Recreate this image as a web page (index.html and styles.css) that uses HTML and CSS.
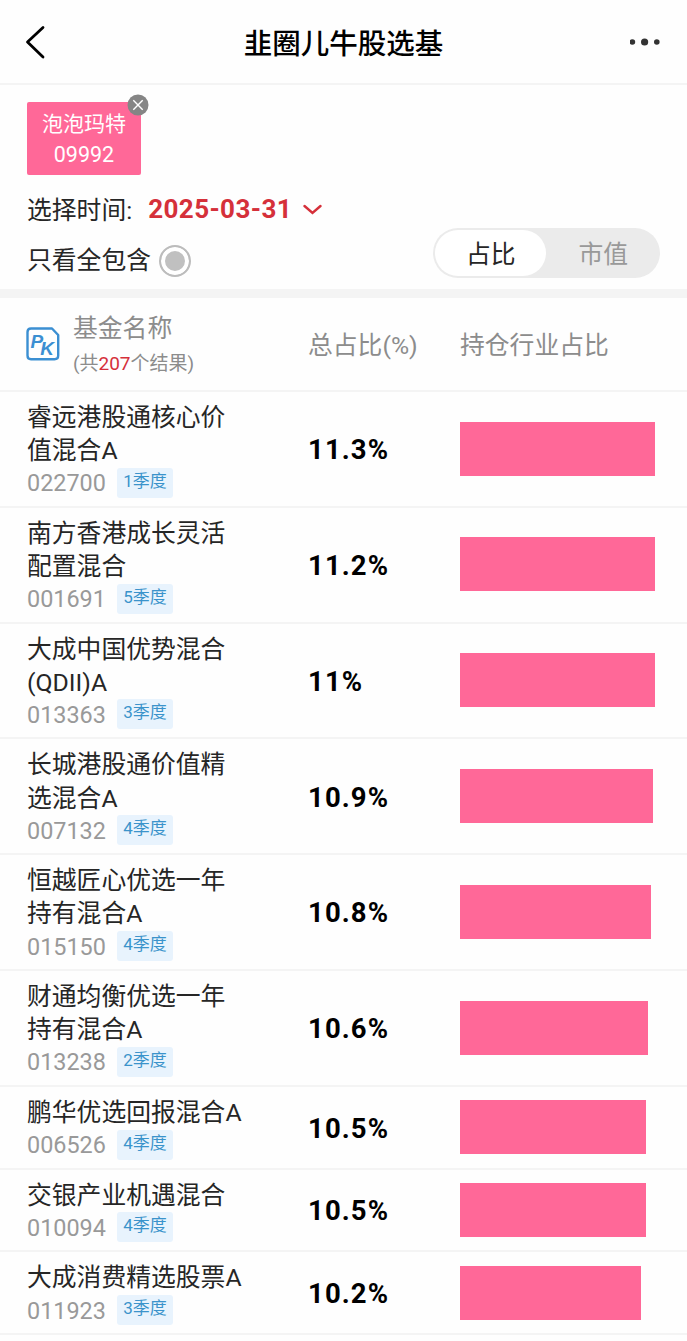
FILE: index.html
```html
<!DOCTYPE html>
<html lang="zh-CN">
<head>
  <meta charset="UTF-8">
  <title>韭圈儿牛股选基</title>
  <link rel="stylesheet" href="styles.css">
</head>
<body>

  <header class="navbar">
    <svg class="back" width="22" height="34" viewBox="0 0 22 34">
      <path d="M19 2.5L3.5 17L19 32" fill="none" stroke="#000" stroke-width="2.8" stroke-linecap="round" stroke-linejoin="round"/>
    </svg>
    <h1>韭圈儿牛股选基</h1>
    <svg class="more" width="32" height="10" viewBox="0 0 32 10">
      <circle cx="2.4" cy="5" r="2.8"/>
      <circle cx="14.6" cy="5" r="3.6"/>
      <circle cx="26.8" cy="5" r="2.8"/>
    </svg>
  </header>

  <section class="filters">
    <div class="stock">
      <span>泡泡玛特</span>
      <span class="stock-code">09992</span>
      <svg class="stock-close" width="22" height="22" viewBox="0 0 22 22">
        <circle cx="11" cy="11" r="10.5" fill="#858585"/>
        <path d="M6.3 6.3L15.7 15.7M15.7 6.3L6.3 15.7" stroke="#fff" stroke-width="1.4"/>
      </svg>
    </div>
    <div class="date-row">
      <span>选择时间:</span>
      <b class="date">2025-03-31</b>
      <svg width="20" height="12" viewBox="0 0 20 12">
        <path d="M1.5 2L9.5 9L17.5 2" fill="none" stroke="#d5303a" stroke-width="2.4" stroke-linecap="round"/>
      </svg>
    </div>
    <div class="option-row">
      <span>只看全包含</span>
      <i class="radio"></i>
      <div class="switch">
        <span class="active">占比</span>
        <span>市值</span>
      </div>
    </div>
  </section>

  <section class="table-head">
    <svg class="pk" width="34" height="34" viewBox="0 0 34 34">
      <path d="M5 1.5H26L32.2 8V28.5Q32.2 32.2 28.5 32.2H5Q1.5 32.2 1.5 28.5V5Q1.5 1.5 5 1.5Z" fill="none" stroke="#3b8fd2" stroke-width="2.4" stroke-linejoin="round"/>
      <text x="4.5" y="21" font-size="19">P<tspan dx="-3" dy="6.5">K</tspan></text>
    </svg>
    <div class="head-name">
      <span>基金名称</span>
      <small>(共<em>207</em>个结果)</small>
    </div>
    <span class="head-total">总占比(%)</span>
    <span>持仓行业占比</span>
  </section>

  <main>
    <div class="row">
      <div class="fund">
        <p>睿远港股通核心价<br>值混合A</p>
        <div class="meta"><span class="code">022700</span><span class="tag">1季度</span></div>
      </div>
      <b class="total">11.3%</b>
      <div class="bar" style="width: 195px"></div>
    </div>
    <div class="row">
      <div class="fund">
        <p>南方香港成长灵活<br>配置混合</p>
        <div class="meta"><span class="code">001691</span><span class="tag">5季度</span></div>
      </div>
      <b class="total">11.2%</b>
      <div class="bar" style="width: 195px"></div>
    </div>
    <div class="row">
      <div class="fund">
        <p>大成中国优势混合<br>(QDII)A</p>
        <div class="meta"><span class="code">013363</span><span class="tag">3季度</span></div>
      </div>
      <b class="total">11%</b>
      <div class="bar" style="width: 195px"></div>
    </div>
    <div class="row">
      <div class="fund">
        <p>长城港股通价值精<br>选混合A</p>
        <div class="meta"><span class="code">007132</span><span class="tag">4季度</span></div>
      </div>
      <b class="total">10.9%</b>
      <div class="bar" style="width: 193px"></div>
    </div>
    <div class="row">
      <div class="fund">
        <p>恒越匠心优选一年<br>持有混合A</p>
        <div class="meta"><span class="code">015150</span><span class="tag">4季度</span></div>
      </div>
      <b class="total">10.8%</b>
      <div class="bar" style="width: 191px"></div>
    </div>
    <div class="row">
      <div class="fund">
        <p>财通均衡优选一年<br>持有混合A</p>
        <div class="meta"><span class="code">013238</span><span class="tag">2季度</span></div>
      </div>
      <b class="total">10.6%</b>
      <div class="bar" style="width: 188px"></div>
    </div>
    <div class="row">
      <div class="fund">
        <p>鹏华优选回报混合A</p>
        <div class="meta"><span class="code">006526</span><span class="tag">4季度</span></div>
      </div>
      <b class="total">10.5%</b>
      <div class="bar" style="width: 186px"></div>
    </div>
    <div class="row">
      <div class="fund">
        <p>交银产业机遇混合</p>
        <div class="meta"><span class="code">010094</span><span class="tag">4季度</span></div>
      </div>
      <b class="total">10.5%</b>
      <div class="bar" style="width: 186px"></div>
    </div>
    <div class="row">
      <div class="fund">
        <p>大成消费精选股票A</p>
        <div class="meta"><span class="code">011923</span><span class="tag">3季度</span></div>
      </div>
      <b class="total">10.2%</b>
      <div class="bar" style="width: 181px"></div>
    </div>
  </main>

</body>
</html>
```
FILE: styles.css
```css
* {
  box-sizing: border-box;
}

body {
  margin: 0;
  height: 1341px;
  overflow: hidden;
  background-color: #fefefe;
  color: #262626;
  font-family: Roboto, "Noto Sans CJK SC", sans-serif;
  font-size: 24.8px;
  line-height: 33px;
  white-space: nowrap;
}

svg {
  display: block;
  flex-shrink: 0;
}

.navbar {
  display: flex;
  align-items: center;
  justify-content: space-between;
  height: 85px;
  padding: 0 25px 0 24px;
  border-bottom: 2px solid #f4f4f4;
}

.navbar h1 {
  margin: 5px 0 0 11px;
  color: #000;
  font-size: 28.5px;
  font-weight: 500;
}

.more {
  fill: #333;
}

/* Filtros */
.filters {
  height: 213px;
  padding: 17px 27px 0;
  border-bottom: 9px solid #f4f4f4;
}

.stock {
  position: relative;
  display: flex;
  flex-direction: column;
  align-items: center;
  width: 114px;
  height: 73px;
  padding-top: 8px;
  border-radius: 2px;
  background-color: #ff6898;
  color: #fff;
  font-size: 21px;
  line-height: 29px;
}

.stock-code {
  font-size: 21.5px;
  line-height: 31px;
}

.stock-close {
  position: absolute;
  top: -8px;
  right: -8px;
}

.date-row {
  display: flex;
  align-items: center;
  height: 34px;
  margin-top: 18px;
}

.date {
  margin: -2px 11px 0 16px;
  color: #d5303a;
  font-size: 26px;
  letter-spacing: 0.4px;
}

.option-row {
  display: flex;
  align-items: center;
  height: 50px;
  margin-top: 1px;
}

.option-row > span {
  margin-top: 14px;
}

.radio {
  width: 32px;
  height: 32px;
  margin: 16px 0 0 8px;
  border: 2px solid #bcbcbc;
  border-radius: 50%;
  background-color: #c0c0c0;
  box-shadow: inset 0 0 0 4px #fff;
}

.switch {
  display: flex;
  width: 227px;
  height: 50px;
  margin-left: auto;
  padding: 2px;
  border-radius: 25px;
  background-color: #ebebeb;
  color: #999;
  line-height: 49px;
  text-align: center;
}

.switch span {
  flex: 1;
  padding-left: 3px;
}

.switch .active {
  padding-left: 1px;
  border-radius: 23px;
  background-color: #fff;
  color: #262626;
}

/* Cabecera de la tabla */
.table-head {
  display: flex;
  align-items: center;
  height: 92px;
  padding: 2px 0 0 26px;
  color: #8c8c8c;
}

.pk {
  margin-top: -2px;
}

.pk text {
  fill: #3b8fd2;
  font-family: "Liberation Sans", sans-serif;
  font-style: italic;
  font-weight: bold;
}

.head-name {
  display: flex;
  flex-direction: column;
  width: 248px;
  padding: 3px 0 0 13px;
}

.head-name small {
  font-size: 19px;
  line-height: 37px;
}

.head-name em {
  color: #d5303a;
  font-style: normal;
}

.head-total {
  width: 152px;
}

/* Lista de fondos */
.row {
  display: flex;
  align-items: center;
  padding: 7px 0 7.55px 27px;
  border-top: 2px solid #f4f4f4;
}

.row:last-child {
  border-bottom: 2px solid #f4f4f4;
}

.fund {
  width: 281px;
}

.fund p {
  margin: 0;
  padding-top: 2px;
  line-height: 33.1px;
}

.meta {
  display: flex;
  align-items: center;
  height: 33.1px;
  margin: -1px 0;
}

.code {
  width: 90px;
  padding-top: 2px;
  color: #999;
  font-size: 23.4px;
}

.tag {
  width: 56px;
  height: 30px;
  border-radius: 3px;
  background-color: #e8f3fd;
  color: #3b93cb;
  font-size: 17px;
  line-height: 27px;
  text-align: center;
}

.total {
  width: 152px;
  padding-top: 2px;
  color: #000;
  font-size: 27.5px;
  letter-spacing: 1.1px;
}

.bar {
  height: 54px;
  background-color: #ff6898;
}
```
